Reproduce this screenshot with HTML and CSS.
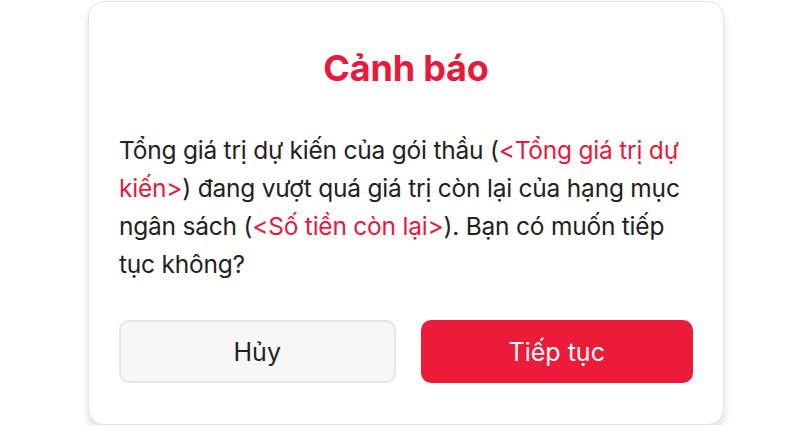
FILE: index.html
```html
<!DOCTYPE html>
<html lang="vi">
<head>
<meta charset="utf-8">
<link rel="stylesheet" href="styles.css">
</head>
<body>
<div class="stage">
  <div class="dialog">
    <h1 class="title">Cảnh báo</h1>
    <p class="message">Tổng giá trị dự kiến của gói thầu (<span class="hl">&lt;Tổng giá trị dự<br>kiến&gt;</span>) đang vượt quá giá trị còn lại của hạng mục<br>ngân sách (<span class="hl">&lt;Số tiền còn lại&gt;</span>). Bạn có muốn tiếp<br>tục không?</p>
    <div class="actions">
      <button class="btn btn-cancel">Hủy</button>
      <button class="btn btn-primary">Tiếp tục</button>
    </div>
  </div>
</div>
</body>
</html>
```

FILE: styles.css
```css
* { box-sizing: border-box; }
html, body { margin: 0; padding: 0; background: #fff; }
body { font-family: Inter, "Noto Sans", sans-serif; color: #222; }
.stage { padding: 1px 0 0 88px; }
.dialog {
  width: 636px;
  height: 424px;
  background: #fff;
  border: 1px solid #e4e4e4;
  border-radius: 16px;
  box-shadow: 0 6px 8px rgba(0,0,0,0.13);
  padding: 44px 30px 0 30px;
}
.title {
  margin: 0;
  text-align: center;
  font-size: 36px;
  line-height: 44px;
  font-weight: 700;
  color: #e8193c;
  letter-spacing: -0.2px;
}
.message {
  margin: 41px 0 0 0;
  font-size: 24.5px;
  line-height: 38px;
  letter-spacing: -0.22px;
  color: #222;
  white-space: nowrap;
}
.hl { color: #e8193c; }
.actions {
  display: flex;
  gap: 25px;
  margin-top: 37px;
}
.btn {
  flex: 1;
  height: 63px;
  border-radius: 10px;
  font-family: inherit;
  font-size: 25px;
  font-weight: 400;
}
.btn-cancel {
  background: #f7f7f7;
  border: 2px solid #e6e6e6;
  color: #222;
}
.btn-primary {
  background: #ed1b3a;
  border: none;
  color: #fff;
}
```
